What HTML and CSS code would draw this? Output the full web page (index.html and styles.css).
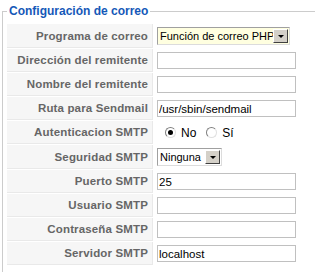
FILE: index.html
```html
<!DOCTYPE html>
<html>
<head>
<meta charset="utf-8">
<link rel="stylesheet" href="styles.css">
</head>
<body>
<fieldset class="adminform">
  <legend>Configuración de correo</legend>
  <table class="admintable">
    <tr>
      <td class="key">Programa de correo</td>
      <td class="val">
        <div class="selectbox wide"><span class="seltext">Función de correo PHP</span><span class="selbtn"><span class="arrow"></span></span></div>
      </td>
    </tr>
    <tr>
      <td class="key">Dirección del remitente</td>
      <td class="val"><input class="text" type="text" value=""></td>
    </tr>
    <tr>
      <td class="key">Nombre del remitente</td>
      <td class="val"><input class="text" type="text" value=""></td>
    </tr>
    <tr>
      <td class="key">Ruta para Sendmail</td>
      <td class="val"><input class="text" type="text" value="/usr/sbin/sendmail"></td>
    </tr>
    <tr>
      <td class="key">Autenticacion SMTP</td>
      <td class="val">
        <div class="radios">
          <label class="radio"><span class="circle checked"></span>No</label>
          <label class="radio"><span class="circle"></span>Sí</label>
        </div>
      </td>
    </tr>
    <tr>
      <td class="key">Seguridad SMTP</td>
      <td class="val">
        <div class="selectbox small"><span class="seltext">Ninguna</span><span class="selbtn"><span class="arrow"></span></span></div>
      </td>
    </tr>
    <tr>
      <td class="key">Puerto SMTP</td>
      <td class="val"><input class="text" type="text" value="25"></td>
    </tr>
    <tr>
      <td class="key">Usuario SMTP</td>
      <td class="val"><input class="text" type="text" value=""></td>
    </tr>
    <tr>
      <td class="key">Contraseña SMTP</td>
      <td class="val"><input class="text" type="password" value=""></td>
    </tr>
    <tr>
      <td class="key">Servidor SMTP</td>
      <td class="val"><input class="text" type="text" value="localhost"></td>
    </tr>
  </table>
</fieldset>
</body>
</html>
```
FILE: styles.css
```css
html, body {
  margin: 0;
  padding: 0;
  background: #fff;
}
body {
  font-family: "Liberation Sans", Arial, sans-serif;
  font-size: 11px;
  color: #333;
}
.adminform {
  margin: 4px 0 0 2px;
  padding: 0 4px 6px 4px;
  border: 1px solid #cccccc;
  border-right: none;
  min-width: 0;
}
.adminform legend {
  color: #1558b8;
  font-size: 12px;
  font-weight: bold;
  padding: 0 2px;
  margin-left: 0;
  line-height: 14px;
}
.admintable {
  border-collapse: separate;
  border-spacing: 1px;
  width: 300px;
  margin: 5px 0 0 -1px;
}
.admintable td {
  padding: 3px;
  height: 16px;
  line-height: 16px;
}
.admintable td.key {
  width: 138px;
  background: #f6f6f6;
  text-align: right;
  color: #666666;
  font-weight: bold;
  font-size: 11.5px;
  letter-spacing: 0.15px;
  border-bottom: 1px solid #e9e9e9;
  border-right: 1px solid #e9e9e9;
  padding-right: 4px;
  white-space: nowrap;
}
.admintable td.val {
  padding-left: 3px;
}
.text {
  display: block;
  box-sizing: border-box;
  width: 139px;
  height: 17px;
  margin: 0;
  padding: 0 1px;
  border: 1px solid #c0c0c0;
  font-family: "Liberation Sans", Arial, sans-serif;
  font-size: 11.5px;
  color: #000;
  background: #fff;
  outline: none;
}
.selectbox {
  display: flex;
  align-items: stretch;
  box-sizing: border-box;
  height: 18px;
  border: 1px solid;
  border-color: #a0a0a0 #dcdcdc #dcdcdc #a0a0a0;
  font-size: 11px;
  color: #000;
}
.selectbox.wide {
  width: 133px;
  background: #ffffe0;
}
.selectbox.small {
  width: 65px;
  background: #fff;
}
.seltext {
  flex: 1;
  padding-left: 2px;
  line-height: 16px;
  white-space: nowrap;
  min-width: 0;
}
.selbtn {
  flex: 0 0 15px;
  margin: 1px;
  background: #d4d0c8;
  border-style: solid;
  border-width: 1px;
  border-color: #ffffff #404040 #404040 #ffffff;
  display: flex;
  align-items: center;
  justify-content: center;
  box-sizing: border-box;
}
.arrow {
  width: 0;
  height: 0;
  border-left: 3px solid transparent;
  border-right: 3px solid transparent;
  border-top: 3px solid #000;
  margin-top: 1px;
}
.radios {
  display: flex;
  align-items: center;
  gap: 10px;
  height: 16px;
  padding-left: 8px;
  color: #000;
  font-size: 12px;
}
.radio {
  display: flex;
  align-items: center;
  gap: 5px;
}
.circle {
  width: 9px;
  height: 9px;
  border-radius: 50%;
  border: 1px solid;
  border-color: #808080 #e0e0e0 #e0e0e0 #808080;
  background: #fff;
  position: relative;
  box-sizing: content-box;
}
.circle.checked::after {
  content: "";
  position: absolute;
  left: 2px;
  top: 2px;
  width: 5px;
  height: 5px;
  border-radius: 50%;
  background: #000;
}
```
